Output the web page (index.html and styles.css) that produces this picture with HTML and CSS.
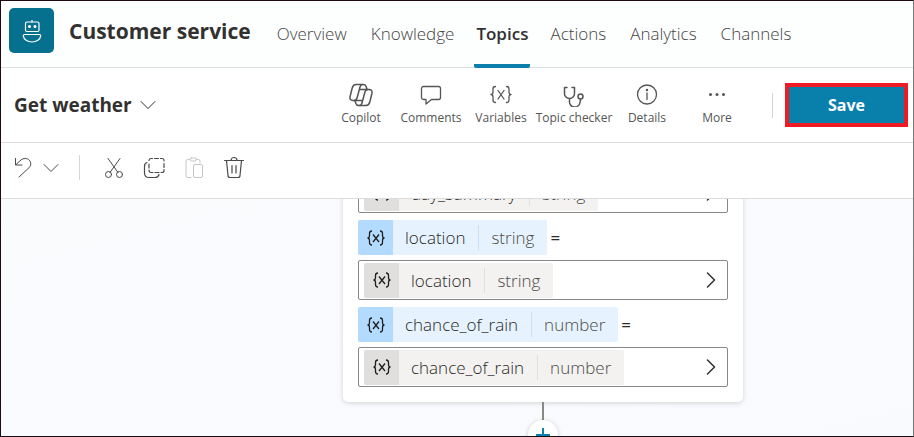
FILE: index.html
```html
<!DOCTYPE html>
<html lang="en">
<head>
<meta charset="utf-8">
<title>Customer service - Topics</title>
<link rel="stylesheet" href="styles.css">
</head>
<body>
<div class="app">
  <header class="header">
    <div class="logo">
      <svg width="22" height="26" viewBox="0 0 22 26" fill="none" stroke="#fff" stroke-width="1.2" stroke-linejoin="round" aria-hidden="true">
        <path d="M11 2v2.500"/><rect x="4.500" y="4" width="13.500" height="9.500" rx="1.500"/>
        <circle cx="8.500" cy="8.500" r=".9" fill="#fff"/><circle cx="14" cy="8.500" r=".9" fill="#fff"/>
        <path d="M3.500 16.500h15a1.200 1.200 0 0 1 1.200 1.300C19.200 21.500 15.500 24 11 24S2.800 21.500 2.300 17.800a1.200 1.200 0 0 1 1.200-1.300z"/>
      </svg>
    </div>
    <h1 class="title">Customer service</h1>
    <nav class="tabs">
      <a class="tab" href="#overview">Overview</a>
      <a class="tab" href="#knowledge">Knowledge</a>
      <a class="tab tab-active" href="#topics" aria-current="page">Topics</a>
      <a class="tab" href="#actions">Actions</a>
      <a class="tab" href="#analytics">Analytics</a>
      <a class="tab" href="#channels">Channels</a>
    </nav>
  </header>

  <div class="commands">
    <button class="topic-name" type="button">Get weather
      <svg class="icon" width="16" height="10" viewBox="0 0 16 10" aria-hidden="true"><path d="M1 1.500l7 7 7-7"/></svg>
    </button>
    <div class="tools">
      <button class="tool" type="button">
        <svg class="icon" width="24" height="24" viewBox="0 0 24 24" stroke-width="1.500" aria-hidden="true">
          <path d="M7.500 17.500H4C1.400 17.500.6 15.800 1.100 13.500L3.200 5C3.800 2.700 5 1.500 7 1.500h7.500c1.500 0 2.200.8 2.700 2.300l.8 2.700"/>
          <path d="M16.500 6.500h3.500c2.600 0 3.400 1.700 2.900 4L20.800 19c-.6 2.300-1.800 3.500-3.800 3.500H9.500c-1.500 0-2.200-.8-2.700-2.300L6 17.500"/>
          <path d="M13.500 1.500c-1.300 0-2 .8-2.400 2.200L8.200 14.500c-.5 1.900-1.200 3-3 3M10.500 22.500c1.300 0 2-.8 2.400-2.200l2.900-10.800c.5-1.900 1.200-3 3-3M10.500 6.500H17M7.500 17.500h6"/>
        </svg>
        Copilot</button>
      <button class="tool" type="button">
        <svg class="icon" width="24" height="24" viewBox="0 0 24 24" stroke-width="1.300" aria-hidden="true"><path d="M4.500 3.500h15a2 2 0 0 1 2 2v9a2 2 0 0 1-2 2h-7L7 21v-4.500H4.500a2 2 0 0 1-2-2v-9a2 2 0 0 1 2-2z"/></svg>
        Comments</button>
      <button class="tool" type="button">
        <svg class="icon" width="24" height="24" viewBox="0 0 24 24" stroke-width="1.300" aria-hidden="true"><path d="M6.500 3.500c-2 0-2.500.8-2.500 2.500v3c0 1.700-.6 2.500-2 2.500 1.400 0 2 .8 2 2.500v3c0 1.700.5 2.500 2.500 2.500M17.500 3.500c2 0 2.500.8 2.500 2.500v3c0 1.700.6 2.500 2 2.500-1.400 0-2 .8-2 2.500v3c0 1.700-.5 2.500-2.500 2.500M9 7.500l6 8.500M15 7.500L9 16"/></svg>
        Variables</button>
      <button class="tool tool-wide" type="button">
        <svg class="icon" width="24" height="24" viewBox="0 0 24 24" stroke-width="1.500" aria-hidden="true"><path d="M5 4.500H2.500v6a5 5 0 0 0 10 0v-6H10M7.500 15.500v2.500a5 5 0 0 0 10.500 1.500c.3-1 .5-1.800.5-3"/><circle cx="18.500" cy="13.500" r="2.500"/></svg>
        Topic checker</button>
      <button class="tool" type="button">
        <svg class="icon" width="24" height="24" viewBox="0 0 24 24" stroke-width="1.300" aria-hidden="true"><circle cx="12" cy="11.500" r="9.500"/><path d="M12 10v6.500"/><circle cx="12" cy="7" r=".6"/></svg>
        Details</button>
      <button class="tool" type="button">
        <svg class="icon dots" width="24" height="24" viewBox="0 0 24 24" aria-hidden="true"><circle cx="5.500" cy="11.500" r="1.500"/><circle cx="12" cy="11.500" r="1.500"/><circle cx="18.500" cy="11.500" r="1.500"/></svg>
        More</button>
    </div>
    <span class="divider"></span>
    <button class="save" type="button">Save</button>
  </div>

  <div class="editbar">
    <button class="edit" type="button" aria-label="Undo"><svg class="icon" width="20" height="24" viewBox="0 0 20 24" aria-hidden="true"><path d="M1.500 2.500V9H8M2 8.500l5-4.500C9.500 2 13 1.800 15.300 4.200c2.200 2.500 1.800 5.500-.3 7.500L5 21"/></svg></button>
    <button class="edit edit-more" type="button" aria-label="Undo history"><svg class="icon" width="16" height="10" viewBox="0 0 16 10" aria-hidden="true"><path d="M1 1.500l7 7 7-7"/></svg></button>
    <span class="divider"></span>
    <button class="edit" type="button" aria-label="Cut"><svg class="icon" width="24" height="24" viewBox="0 0 24 24" aria-hidden="true"><path d="M6 2.500l10 14M18 2.500l-10 14"/><circle cx="6.500" cy="18.500" r="3"/><circle cx="17.500" cy="18.500" r="3"/></svg></button>
    <button class="edit" type="button" aria-label="Copy"><svg class="icon" width="24" height="24" viewBox="0 0 24 24" stroke-width="1.200" aria-hidden="true"><path d="M7 4.500V4.300A2 2 0 0 1 9 2.500h1.500M12.500 2.500h4M18.500 2.500H20a2 2 0 0 1 2 2V5M22 7.500v4M22 13.500v1a2 2 0 0 1-2 2h-1M17 16.500h-4M11 16.500H9a2 2 0 0 1-2-2V14M7 12V8"/><path d="M5 6.500C3 7 2.500 8 2.500 10v7c0 3 1.500 4.500 4.500 4.500h6c2 0 3.500-.8 4-3"/></svg></button>
    <button class="edit" type="button" aria-label="Paste" disabled><svg class="icon" width="24" height="24" viewBox="0 0 24 24" aria-hidden="true"><path d="M9 21.500H5.500a1.500 1.500 0 0 1-1.500-1.500V5a1.500 1.500 0 0 1 1.500-1.500H8M14 3.500h2.500A1.500 1.500 0 0 1 18 5v2"/><rect x="8" y="2" width="6.500" height="3" rx="1.500"/><rect x="11.500" y="8.500" width="9" height="13" rx="1.500"/></svg></button>
    <button class="edit" type="button" aria-label="Delete"><svg class="icon" width="24" height="24" viewBox="0 0 24 24" stroke-width="1.200" aria-hidden="true"><path d="M2.500 4.500h19M9 4.500a3 3 0 0 1 6 0M4.500 4.500l1.500 15a2 2 0 0 0 2 2h8a2 2 0 0 0 2-2l1.500-15M10 9.500v7.500M14 9.500v7.500"/></svg></button>
  </div>

  <main class="canvas">
    <section class="card">
      <button class="field" type="button">
        <span class="chip"><span class="chip-icon"><svg class="vx" width="20" height="20" viewBox="0 0 20 20" aria-hidden="true"><path d="M6 3C4 3 3.500 4 3.500 5.500v2C3.500 9 3 10 1.500 10 3 10 3.500 11 3.500 12.500v2c0 1.500.5 2.500 2.500 2.500M14 3c2 0 2.500 1 2.500 2.500v2c0 1.500.5 2.500 2 2.500-1.500 0-2 1-2 2.500v2c0 1.500-.5 2.500-2.500 2.500M7 6.500l6 7.500M13 6.500L7 14"/></svg></span><span class="name">day_summary</span><span class="type">string</span></span>
        <svg class="icon go" width="10" height="16" viewBox="0 0 10 16" aria-hidden="true"><path d="M1.500 1l7 7-7 7"/></svg>
      </button>
      <div class="assign">
        <span class="chip chip-blue"><span class="chip-icon"><svg class="vx" width="20" height="20" viewBox="0 0 20 20" aria-hidden="true"><path d="M6 3C4 3 3.500 4 3.500 5.500v2C3.500 9 3 10 1.500 10 3 10 3.500 11 3.500 12.500v2c0 1.500.5 2.500 2.500 2.500M14 3c2 0 2.500 1 2.500 2.500v2c0 1.500.5 2.500 2 2.500-1.500 0-2 1-2 2.500v2c0 1.500-.5 2.500-2.500 2.500M7 6.500l6 7.500M13 6.500L7 14"/></svg></span><span class="name">location</span><span class="type">string</span></span>
        <span class="equals">=</span>
      </div>
      <button class="field" type="button">
        <span class="chip"><span class="chip-icon"><svg class="vx" width="20" height="20" viewBox="0 0 20 20" aria-hidden="true"><path d="M6 3C4 3 3.500 4 3.500 5.500v2C3.500 9 3 10 1.500 10 3 10 3.500 11 3.500 12.500v2c0 1.500.5 2.500 2.500 2.500M14 3c2 0 2.500 1 2.500 2.500v2c0 1.500.5 2.500 2 2.500-1.500 0-2 1-2 2.500v2c0 1.500-.5 2.500-2.500 2.500M7 6.500l6 7.500M13 6.500L7 14"/></svg></span><span class="name">location</span><span class="type">string</span></span>
        <svg class="icon go" width="10" height="16" viewBox="0 0 10 16" aria-hidden="true"><path d="M1.500 1l7 7-7 7"/></svg>
      </button>
      <div class="assign">
        <span class="chip chip-blue"><span class="chip-icon"><svg class="vx" width="20" height="20" viewBox="0 0 20 20" aria-hidden="true"><path d="M6 3C4 3 3.500 4 3.500 5.500v2C3.500 9 3 10 1.500 10 3 10 3.500 11 3.500 12.500v2c0 1.500.5 2.500 2.500 2.500M14 3c2 0 2.500 1 2.500 2.500v2c0 1.500.5 2.500 2 2.500-1.500 0-2 1-2 2.500v2c0 1.500-.5 2.500-2.500 2.500M7 6.500l6 7.500M13 6.500L7 14"/></svg></span><span class="name">chance_of_rain</span><span class="type">number</span></span>
        <span class="equals">=</span>
      </div>
      <button class="field" type="button">
        <span class="chip"><span class="chip-icon"><svg class="vx" width="20" height="20" viewBox="0 0 20 20" aria-hidden="true"><path d="M6 3C4 3 3.500 4 3.500 5.500v2C3.500 9 3 10 1.500 10 3 10 3.500 11 3.500 12.500v2c0 1.500.5 2.500 2.500 2.500M14 3c2 0 2.500 1 2.500 2.500v2c0 1.500.5 2.500 2 2.500-1.500 0-2 1-2 2.500v2c0 1.500-.5 2.500-2.500 2.500M7 6.500l6 7.500M13 6.500L7 14"/></svg></span><span class="name">chance_of_rain</span><span class="type">number</span></span>
        <svg class="icon go" width="10" height="16" viewBox="0 0 10 16" aria-hidden="true"><path d="M1.500 1l7 7-7 7"/></svg>
      </button>
    </section>
    <span class="stem"></span>
    <button class="add" type="button" aria-label="Add node"><svg width="16" height="16" viewBox="0 0 16 16" fill="none" stroke="#0b80ac" stroke-width="2" aria-hidden="true"><path d="M8 1v14M1 8h14"/></svg></button>
  </main>
</div>
</body>
</html>
```
FILE: styles.css
```css
* { box-sizing: border-box; }

body {
  margin: 0;
  font-family: "Open Sans", "Noto Sans", sans-serif;
  font-size: 17px;
  font-weight: 300;
  color: #292827;
}

button {
  margin: 0;
  padding: 0;
  border: 0;
  background: none;
  font: inherit;
  color: inherit;
}

svg { flex: none; }

.icon {
  display: block;
  fill: none;
  stroke: currentColor;
  stroke-linecap: round;
  stroke-linejoin: round;
}

.app {
  display: flex;
  flex-direction: column;
  height: 100vh;
  border: 1px solid #1c0b10;
  border-right-color: #777;
  background: #fff;
}

.header {
  display: flex;
  flex: none;
  height: 67px;
  padding-left: 8px;
  border-bottom: 1px solid #dcdfe0;
  background: #fdfefe;
}

.logo {
  display: flex;
  align-items: center;
  justify-content: center;
  width: 45px;
  height: 45px;
  margin-top: 7px;
  border-radius: 5px;
  background: #06718f;
}

.title {
  margin: 0 26px 0 15px;
  color: #323130;
  font-size: 21px;
  font-weight: 700;
  line-height: 60px;
  white-space: nowrap;
}

.tabs {
  display: flex;
  gap: 24px;
}

.tab {
  height: 67px;
  color: #444;
  line-height: 66px;
  text-decoration: none;
}

.tab-active {
  margin: 0 -4px;
  padding: 0 2px;
  border-bottom: 4px solid #0b80ac;
  border-radius: 2px;
  color: #323130;
  font-weight: 600;
}

.commands {
  display: flex;
  flex: none;
  align-items: center;
  height: 75px;
  padding-left: 13px;
  padding-right: 5px;
  border-bottom: 1px solid #dcdcdc;
}

.topic-name {
  display: flex;
  align-items: center;
  gap: 8px;
  color: #323130;
  font-size: 19px;
  font-weight: 700;
  white-space: nowrap;
}

.tools {
  display: flex;
  margin-left: auto;
  color: #555;
}

.tool {
  display: flex;
  flex-direction: column;
  align-items: center;
  gap: 1px;
  width: 70px;
  font-size: 12px;
  font-weight: 400;
  line-height: 20px;
  white-space: nowrap;
}

.tool-wide { width: 76px; }

.dots { fill: currentColor; stroke: none; }

.divider {
  flex: none;
  width: 1px;
  height: 25px;
  background: #d6d6d6;
}

.commands .divider { margin: 0 12px 0 20px; }

.save {
  width: 123px;
  height: 44px;
  border: 4px solid #ee1b24;
  background: #0880ab;
  color: #fff;
  font-size: 16px;
  font-weight: 700;
}

.editbar {
  display: flex;
  flex: none;
  align-items: center;
  height: 56px;
  padding: 0 13px 6px;
  border-bottom: 1px solid #dcdcdc;
  color: #4a4a4a;
}

.edit { margin-right: 16px; }
.edit:first-child { margin-right: 9px; }
.edit-more { margin-right: 20px; }
.edit:disabled { color: #c8c6c4; }
.editbar .divider { margin-right: 22px; }

.canvas {
  display: flex;
  flex: 1;
  flex-direction: column;
  align-items: center;
  justify-content: flex-end;
  min-height: 0;
  padding-left: 172px;
  overflow: hidden;
  background: linear-gradient(to bottom right, #fafbfd, #f8fafe);
}

.card {
  flex: none;
  width: 400px;
  padding: 15px;
  border-radius: 5px;
  background: #fff;
  box-shadow: 0 1px 5px rgba(0, 0, 0, 0.16);
}

.field {
  display: flex;
  align-items: center;
  justify-content: space-between;
  width: 100%;
  height: 40px;
  padding: 0 11px 0 5px;
  border: 1px solid #8a8886;
  border-radius: 2px;
}

.assign {
  display: flex;
  align-items: center;
  gap: 3px;
  margin: 7px 0 5px;
}

.chip {
  display: flex;
  align-items: center;
  height: 35px;
  border-radius: 2px;
  background: #f3f2f0;
  overflow: hidden;
}

.chip-icon {
  display: flex;
  align-items: center;
  justify-content: center;
  width: 35px;
  height: 35px;
  background: #e1dfdd;
}

.vx {
  fill: none;
  stroke: #201f1e;
  stroke-width: 1.3;
}

.name,
.type {
  padding: 0 13px 0 12px;
  line-height: 25px;
}

.type {
  border-left: 1px solid #e0dfde;
  color: #4c4a48;
}

.chip-blue { background: #e6f3ff; }
.chip-blue .chip-icon { background: #b3dbff; }
.chip-blue .type { border-color: #d2dfea; }

.equals { font-weight: 400; }

.go { color: #323130; stroke-width: 1.5; }

.stem {
  flex: none;
  width: 2px;
  height: 18px;
  background: #8a8886;
}

.add {
  display: flex;
  flex: none;
  align-items: center;
  justify-content: center;
  width: 30px;
  height: 30px;
  margin-bottom: -14px;
  border-radius: 50%;
  background: #fff;
  box-shadow: 0 1px 5px rgba(0, 0, 0, 0.2);
}
```
